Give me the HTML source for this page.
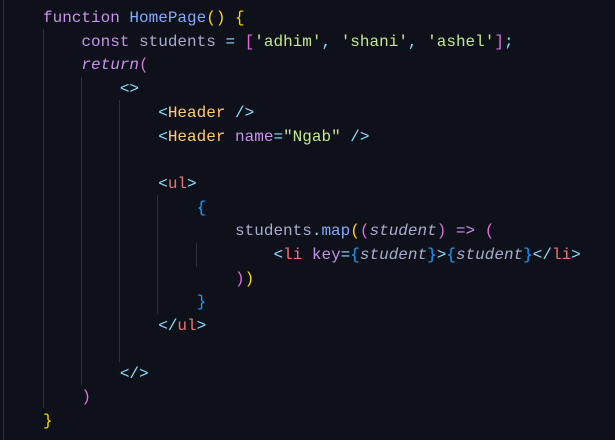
<!DOCTYPE html>
<html><head><meta charset="utf-8"><style>
html,body{margin:0;padding:0;background:#0f111a;width:615px;height:440px;overflow:hidden}
.code{position:absolute;left:43px;top:7px;font-family:"Liberation Mono",monospace;font-size:16px;line-height:23.7px;color:#a6accd;white-space:pre}
.g{position:absolute;width:1px;background:#2a2d3d}
.k{color:#c792ea}.f{color:#82aaff}.y{color:#ffd700}.p{color:#da70d6}.b{color:#179fff}
.s{color:#c3e88d}.o{color:#89ddff}.t{color:#f07178}.h{color:#ffcb6b}.i{font-style:italic}
</style></head><body>
<div class="g" style="left:3px;top:0;height:440px"></div>
<div class="g" style="left:43px;top:29px;height:379px"></div>
<div class="g" style="left:81px;top:77px;height:308px"></div>
<div class="g" style="left:119px;top:100px;height:262px"></div>
<div class="g" style="left:157px;top:195px;height:119px"></div>
<div class="g" style="left:196px;top:243px;height:24px"></div>
<div class="code"><span class="k">function</span> <span class="f">HomePage</span><span class="y">()</span> <span class="y">{</span>
    <span class="k">const</span> students <span class="o">=</span> <span class="p">[</span><span class="s">'adhim'</span><span class="o">,</span> <span class="s">'shani'</span><span class="o">,</span> <span class="s">'ashel'</span><span class="p">]</span><span class="o">;</span>
    <span class="k i">return</span><span class="p">(</span>
        <span class="o">&lt;&gt;</span>
            <span class="o">&lt;</span><span class="h">Header</span> <span class="o">/&gt;</span>
            <span class="o">&lt;</span><span class="h">Header</span> <span class="k">name</span><span class="o">=</span><span class="s">"Ngab"</span> <span class="o">/&gt;</span>

            <span class="o">&lt;</span><span class="t">ul</span><span class="o">&gt;</span>
                <span class="b">{</span>
                    students<span class="o">.</span><span class="f">map</span><span class="y">(</span><span class="p">(</span><span class="i">student</span><span class="p">)</span> <span class="k">=&gt;</span> <span class="p">(</span>
                        <span class="o">&lt;</span><span class="t">li</span> <span class="k">key</span><span class="o">=</span><span class="b">{</span><span class="i">student</span><span class="b">}</span><span class="o">&gt;</span><span class="b">{</span><span class="i">student</span><span class="b">}</span><span class="o">&lt;/</span><span class="t">li</span><span class="o">&gt;</span>
                    <span class="p">)</span><span class="y">)</span>
                <span class="b">}</span>
            <span class="o">&lt;/</span><span class="t">ul</span><span class="o">&gt;</span>

        <span class="o">&lt;/&gt;</span>
    <span class="p">)</span>
<span class="y">}</span></div>
</body></html>
